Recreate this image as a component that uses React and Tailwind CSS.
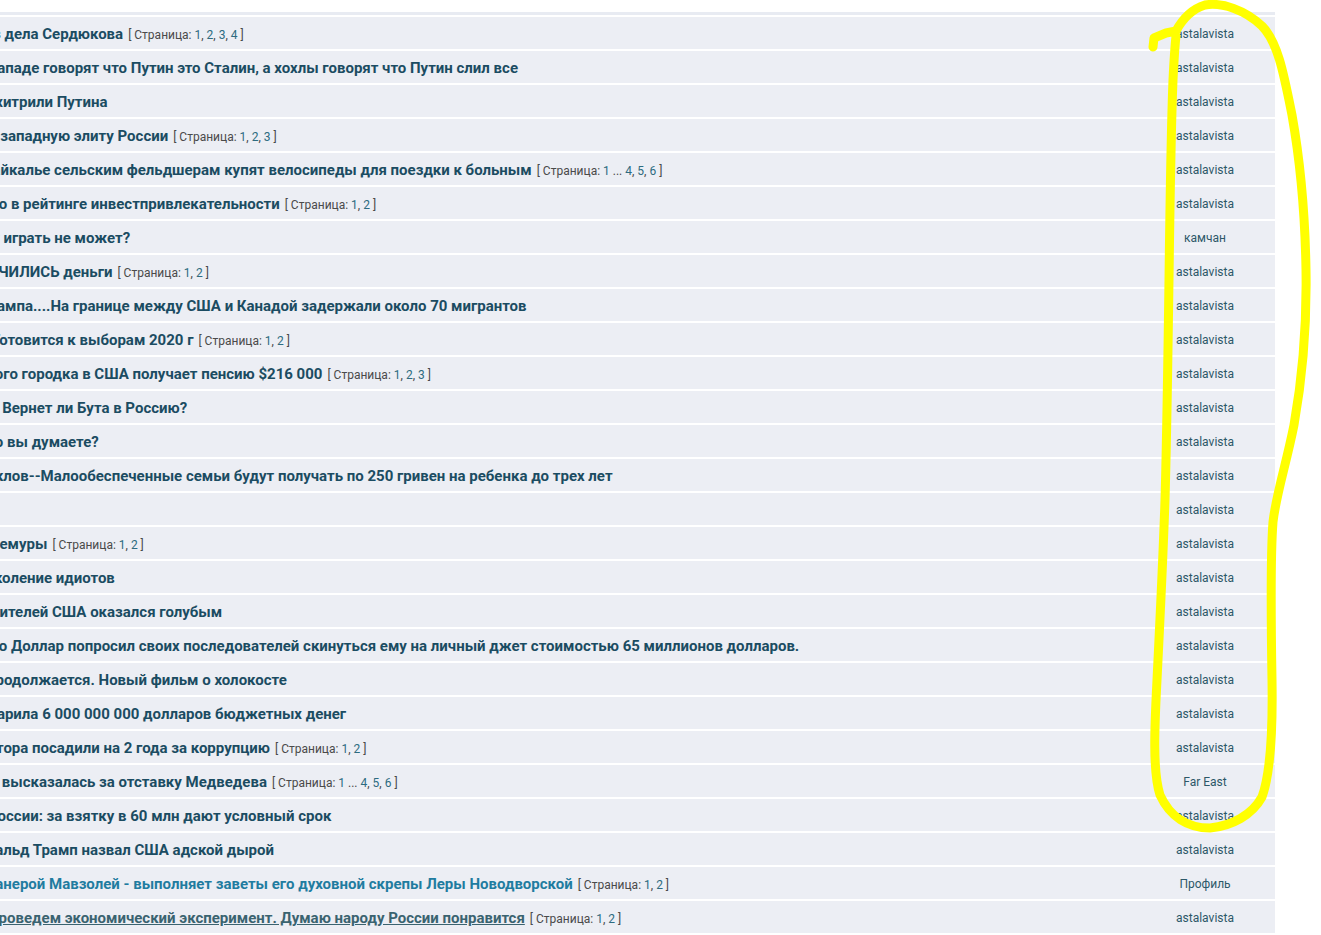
import React from "react";

const rows = [
  { t: "з дела Сердюкова", ml: "ml-[-7px]", pages: ["1", "2", "3", "4"], a: "astalavista" },
  { t: "Западе говорят что Путин это Сталин, а хохлы говорят что Путин слил все", ml: "ml-[-12px]", a: "astalavista" },
  { t: "Перехитрили Путина", ml: "ml-[-40px]", a: "astalavista" },
  { t: "на западную элиту России", ml: "ml-[-20px]", pages: ["1", "2", "3"], a: "astalavista" },
  { t: "Байкалье сельским фельдшерам купят велосипеды для поездки к больным", ml: "ml-[-17px]", pages: ["1", "…", "4", "5", "6"], a: "astalavista" },
  { t: "место в рейтинге инвестпривлекательности", ml: "ml-[-36px]", pages: ["1", "2"], a: "astalavista" },
  { t: "т играть не может?", ml: "ml-[-8px]", a: "камчан" },
  { t: "КОНЧИЛИСЬ деньги", ml: "ml-[-32px]", pages: ["1", "2"], a: "astalavista" },
  { t: "Трампа....На границе между США и Канадой задержали около 70 мигрантов", ml: "ml-[-20px]", a: "astalavista" },
  { t: "Готовится к выборам 2020 г", ml: "ml-[-8px]", pages: ["1", "2"], a: "astalavista" },
  { t: "одного городка в США получает пенсию $216 000", ml: "ml-[-31px]", pages: ["1", "2", "3"], a: "astalavista" },
  { t: "? Вернет ли Бута в Россию?", ml: "ml-[-9px]", a: "astalavista" },
  { t: "Что вы думаете?", ml: "ml-[-23px]", a: "astalavista" },
  { t: "Циклов--Малообеспеченные семьи будут получать по 250 гривен на ребенка до трех лет", ml: "ml-[-25px]", a: "astalavista" },
  { t: "", ml: "", a: "astalavista" },
  { t: "лемуры", ml: "ml-[-9px]", pages: ["1", "2"], a: "astalavista" },
  { t: "поколение идиотов", ml: "ml-[-23px]", a: "astalavista" },
  { t: "правителей США оказался голубым", ml: "ml-[-34px]", a: "astalavista" },
  { t: "Что Доллар попросил своих последователей скинуться ему на личный джет стоимостью 65 миллионов долларов.", ml: "ml-[-19px]", a: "astalavista" },
  { t: "продолжается. Новый фильм о холокосте", ml: "ml-[-13px]", a: "astalavista" },
  { t: "подарила 6 000 000 000 долларов бюджетных денег", ml: "ml-[-29px]", a: "astalavista" },
  { t: "ректора посадили на 2 года за коррупцию", ml: "ml-[-29px]", pages: ["1", "2"], a: "astalavista" },
  { t: "а высказалась за отставку Медведева", ml: "ml-[-10px]", pages: ["1", "…", "4", "5", "6"], a: "Far East" },
  { t: "России: за взятку в 60 млн дают условный срок", ml: "ml-[-12px]", a: "astalavista" },
  { t: "Дональд Трамп назвал США адской дырой", ml: "ml-[-33px]", a: "astalavista" },
  { t: "Мумией манерой Мавзолей - выполняет заветы его духовной скрепы Леры Новодворской", ml: "ml-[-77px]", pages: ["1", "2"], a: "Профиль", tone: "light" },
  { t: "Проведем экономический эксперимент. Думаю народу России понравится", ml: "ml-[-12px]", pages: ["1", "2"], a: "astalavista", tone: "hover" },
];

function Pages({ pages }) {
  const out = [];
  pages.forEach((p, i) => {
    if (p === "…") {
      out.push(<span key={i} className="text-[#4a4a4a]"> ... </span>);
      return;
    }
    const prev = pages[i - 1];
    if (i > 0 && prev !== "…") out.push(<span key={"c" + i} className="text-[#4a4a4a]">, </span>);
    out.push(
      <span key={i} className="text-[#2d6b80]">
        {p}
      </span>
    );
  });
  return (
    <span className="ml-[5px] inline-block text-[12px] font-normal no-underline text-[#4a4a4a]">
      [ Страница: {out} ]
    </span>
  );
}

export default function App() {
  return (
    <div
      className="relative w-[1321px] h-[935px] overflow-hidden bg-white"
      style={{ fontFamily: "Roboto, 'Noto Sans', sans-serif" }}
    >
      <div className="flex w-[1275px] flex-col pt-[12px]">
        <div className="h-[3px] bg-[#e8ebf2]" />
        <div className="mt-[2px] flex flex-col gap-[2px]">
          {rows.map((r, i) => {
            const color =
              r.tone === "light"
                ? "text-[#1f7ca0]"
                : r.tone === "hover"
                ? "text-[#3a6370]"
                : "text-[#1b4c62]";
            return (
              <div key={i} className="flex h-[32px] items-center bg-[#eceef4] pt-[2px]">
                <div className="min-w-0 flex-1 overflow-hidden whitespace-nowrap">
                  <span className={`inline-block ${r.ml} text-[15px] font-bold ${color}`}>
                    <span className={r.tone === "hover" ? "underline" : ""}>{r.t}</span>
                    {r.pages && <Pages pages={r.pages} />}
                  </span>
                </div>
                <div className="w-[140px] shrink-0 text-center text-[12px] text-[#2c5868]">
                  {r.a}
                </div>
              </div>
            );
          })}
        </div>
      </div>

      <svg
        className="pointer-events-none absolute left-0 top-0"
        width="1321"
        height="935"
        viewBox="0 0 1321 935"
      >
        <path
          d="M1153 47 L1154 38 L1166 33 L1176 31 C1182 20 1192 9 1205 5 C1222 2 1245 10 1262 26 C1278 42 1284 75 1292 115 C1300 160 1305 210 1306 270 C1307 330 1302 380 1294 425 C1286 465 1276 495 1273 522 C1270 560 1271 620 1272 680 C1273 740 1270 775 1262 797 C1252 815 1232 826 1210 828 C1188 828 1170 817 1160 795 C1152 770 1155 720 1157 680 C1160 620 1163 560 1165 500 C1167 430 1168 350 1169 280 C1170 200 1171 130 1173 80 C1174 60 1175 45 1176 36"
          fill="none"
          stroke="#ffff00"
          strokeWidth="9"
          strokeLinecap="round"
          strokeLinejoin="round"
        />
      </svg>
    </div>
  );
}
